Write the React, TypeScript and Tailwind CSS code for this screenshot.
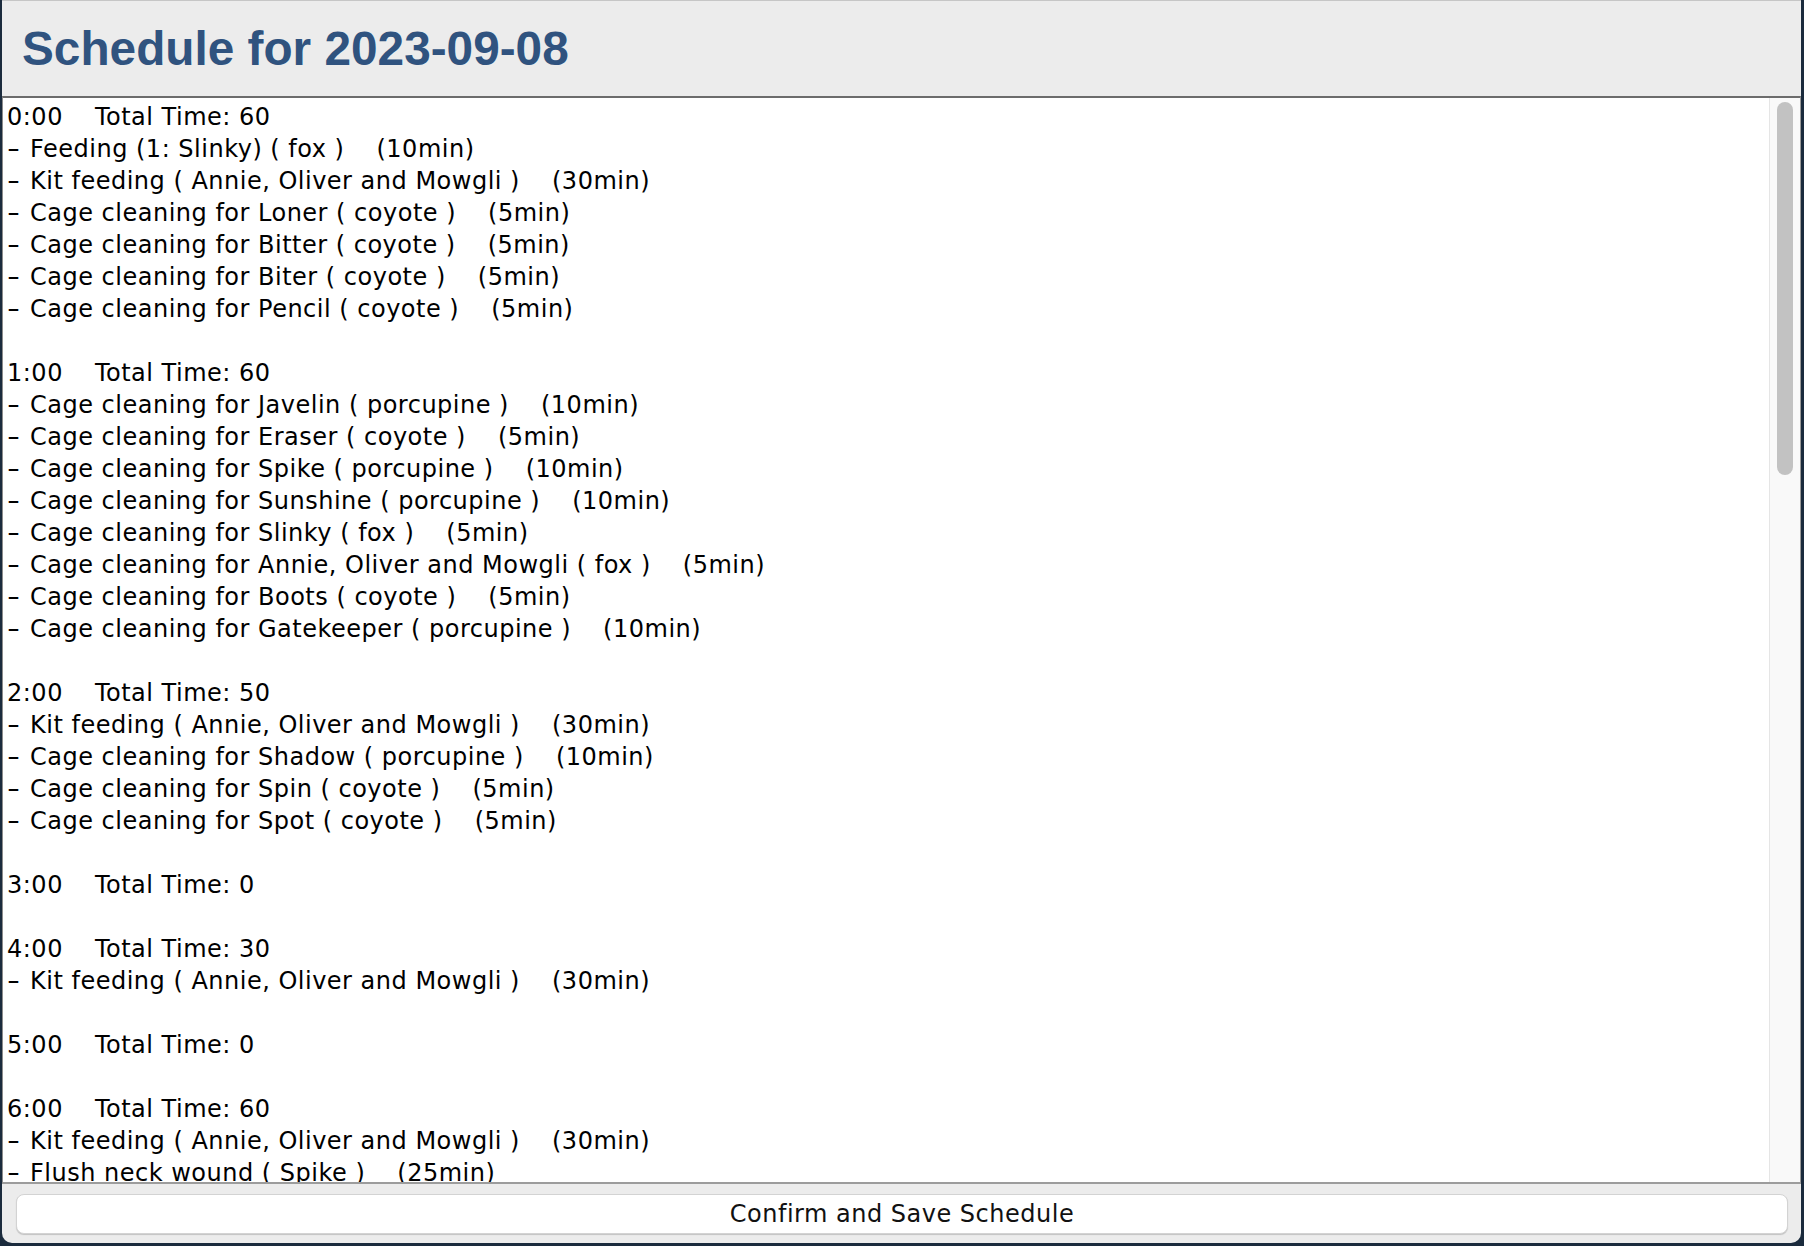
import React from "react";

type Task = { label: string; minutes: number };
type Slot = { time: string; total: number; tasks: Task[] };

const schedule: Slot[] = [
  {
    time: "0:00",
    total: 60,
    tasks: [
      { label: "Feeding (1: Slinky) ( fox )", minutes: 10 },
      { label: "Kit feeding ( Annie, Oliver and Mowgli )", minutes: 30 },
      { label: "Cage cleaning for Loner ( coyote )", minutes: 5 },
      { label: "Cage cleaning for Bitter ( coyote )", minutes: 5 },
      { label: "Cage cleaning for Biter ( coyote )", minutes: 5 },
      { label: "Cage cleaning for Pencil ( coyote )", minutes: 5 },
    ],
  },
  {
    time: "1:00",
    total: 60,
    tasks: [
      { label: "Cage cleaning for Javelin ( porcupine )", minutes: 10 },
      { label: "Cage cleaning for Eraser ( coyote )", minutes: 5 },
      { label: "Cage cleaning for Spike ( porcupine )", minutes: 10 },
      { label: "Cage cleaning for Sunshine ( porcupine )", minutes: 10 },
      { label: "Cage cleaning for Slinky ( fox )", minutes: 5 },
      { label: "Cage cleaning for Annie, Oliver and Mowgli ( fox )", minutes: 5 },
      { label: "Cage cleaning for Boots ( coyote )", minutes: 5 },
      { label: "Cage cleaning for Gatekeeper ( porcupine )", minutes: 10 },
    ],
  },
  {
    time: "2:00",
    total: 50,
    tasks: [
      { label: "Kit feeding ( Annie, Oliver and Mowgli )", minutes: 30 },
      { label: "Cage cleaning for Shadow ( porcupine )", minutes: 10 },
      { label: "Cage cleaning for Spin ( coyote )", minutes: 5 },
      { label: "Cage cleaning for Spot ( coyote )", minutes: 5 },
    ],
  },
  { time: "3:00", total: 0, tasks: [] },
  {
    time: "4:00",
    total: 30,
    tasks: [{ label: "Kit feeding ( Annie, Oliver and Mowgli )", minutes: 30 }],
  },
  { time: "5:00", total: 0, tasks: [] },
  {
    time: "6:00",
    total: 60,
    tasks: [
      { label: "Kit feeding ( Annie, Oliver and Mowgli )", minutes: 30 },
      { label: "Flush neck wound ( Spike )", minutes: 25 },
    ],
  },
];

const bodyFont = "font-['DejaVu_Sans',sans-serif] tracking-[0.5px]";

function SlotBlock({ slot }: { slot: Slot }) {
  return (
    <div className="pb-[32px]">
      <div className="flex h-[32px] items-center whitespace-pre">
        <span>{slot.time}</span>
        <span className="ml-[32px]">Total Time: {slot.total}</span>
      </div>
      {slot.tasks.map((t, i) => (
        <div key={i} className="flex h-[32px] items-center whitespace-pre">
          <span className="inline-block w-[23px]">
            <span className="inline-block origin-left scale-x-150">-</span>
          </span>
          <span>{t.label}</span>
          <span className="ml-[32px]">({t.minutes}min)</span>
        </div>
      ))}
    </div>
  );
}

export default function App() {
  return (
    <div className="h-screen w-full overflow-hidden bg-[#1b2b3d]">
      <div className="ml-[2px] flex h-[1243px] w-[1799px] flex-col overflow-hidden rounded-b-[10px] border-t border-[#c6c6c6] bg-[#ececec]">
        {/* Header */}
        <div className="flex h-[95px] flex-shrink-0 items-center pl-[20px]">
          <h1 className="font-['Liberation_Sans',Arial,sans-serif] text-[47.75px] font-bold leading-none text-[#30537f]">
            Schedule for 2023-09-08
          </h1>
        </div>

        {/* Schedule text area */}
        <div className="flex min-h-0 flex-1 border-x border-t-2 border-b-2 border-l-[#8c8c8c] border-r-[#9a9a9a] border-t-[#6c6c6c] border-b-[#9c9c9c] bg-white">
          <div className={`flex-1 overflow-hidden pl-[4px] pt-[3px] text-[24px] text-black ${bodyFont}`}>
            {schedule.map((slot) => (
              <SlotBlock key={slot.time} slot={slot} />
            ))}
          </div>
          <div className="w-[31px] flex-shrink-0 border-l border-[#e5e5e5] bg-[#f9f9f9] pt-[4px]">
            <div className="mx-auto h-[373px] w-[16px] rounded-full bg-[#c2c2c2]" />
          </div>
        </div>

        {/* Footer */}
        <div className="flex h-[59px] flex-shrink-0 items-center pl-[14px] pr-[13px]">
          <button
            className={`flex h-[40px] w-full items-center justify-center rounded-[8px] border border-[#d3d3d3] bg-white text-[24px] text-[#111] shadow-[0_1px_1px_rgba(0,0,0,0.18)] ${bodyFont}`}
          >
            Confirm and Save Schedule
          </button>
        </div>
      </div>
    </div>
  );
}
